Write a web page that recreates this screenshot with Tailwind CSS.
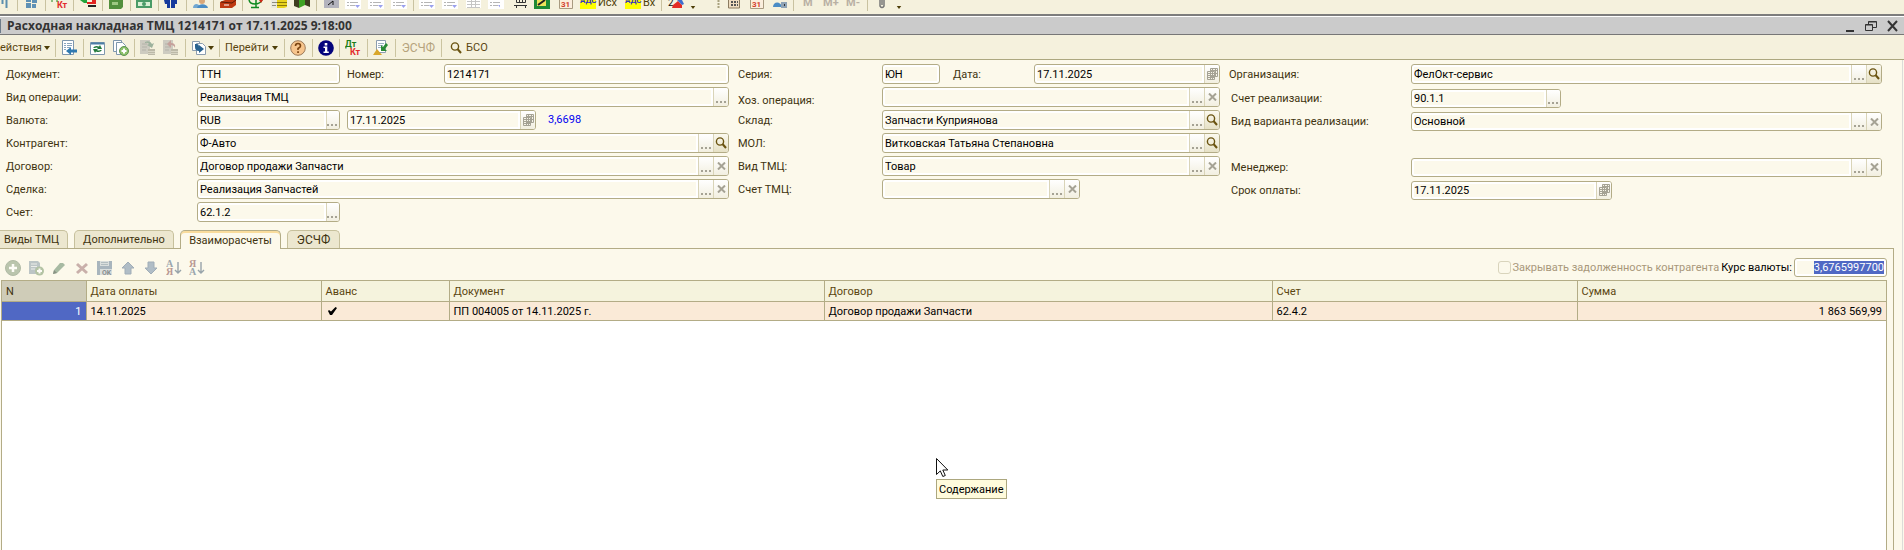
<!DOCTYPE html>
<html lang="ru">
<head>
    <meta charset="UTF-8">
    <meta name="viewport" content="width=device-width, initial-scale=1.0">
    <title>Расходная накладная ТМЦ</title>
    <script src="https://cdn.jsdelivr.net/npm/@tailwindcss/browser@4"></script>
</head>
<body class="min-h-screen flex flex-col overflow-hidden bg-[#fcf9eb] font-['Roboto',sans-serif] text-[11px] leading-[14px] text-[#40330f]">

    <!-- Общие иконки -->
    <svg class="hidden">
        <symbol id="dots" viewBox="0 0 11 2"><path d="M0 0h2v2H0zM4 0h2v2H4zM8 0h2v2H8z" fill="#a5a294"/></symbol>
        <symbol id="cross" viewBox="0 0 9 8"><path d="M1 .5 8 7.5M8 .5 1 7.5" stroke="#a5a294" stroke-width="2"/></symbol>
        <symbol id="lens" viewBox="0 0 12 12"><circle cx="5" cy="4.5" r="3.6" fill="none" stroke="#6a5310" stroke-width="1.4"/><path d="m7.5 7 3.5 4" stroke="#6a5310" stroke-width="2"/></symbol>
        <symbol id="cal" viewBox="0 0 11 12"><path d="M3.500.5h7v8h-7zM.5 3.500h7v8h-7z" fill="#f6f4e8" stroke="#a5a294"/><path d="M3.500 3.500v8M5.500.5v11M8.500.5v8M.5 5.500h10M.5 7.500h7M.5 9.500h7M3.500 2.500h7" fill="none" stroke="#a5a294"/></symbol>
        <symbol id="down" viewBox="0 0 6 4"><path d="M0 0h6L3 4z" fill="#4d3e08"/></symbol>
        <symbol id="doc" viewBox="0 0 16 9"><path d="M0 0h16v9H0z" fill="#fff"/><path d="M2 2.500h2M5 2.500h8M2 5.500h2M5 5.500h5" stroke="#b5b5b5"/><path d="M10 5h5l-2.500 3z" fill="#9aa0ee"/></symbol>
        <symbol id="cal31" viewBox="0 0 14 9"><path d="M.5-2h13v10.500H.5z" fill="#fbeedd" stroke="#a89a80"/></symbol>
    </svg>

    <!-- Верхняя панель: иконки видны только нижней частью -->
    <header class="flex items-start h-4 pr-4 overflow-hidden bg-[#f5f1dd] border-b-2 border-[#7d7d7d]">
        <svg class="w-[500px] h-[14px] shrink-0" viewBox="0 0 500 14">
            <path d="M17.500 0v11M45.500 0v11M73.500 0v11M102.500 0v11M130.500 0v11M158.500 0v11M186.500 0v11M213.500 0v11M242.500 0v11M316.500 0v11M413.500 0v11" stroke="#c9c2a0"/>
            <path d="M2.500 0v4M6.500 0v8" stroke="#5c8fae" stroke-width="2"/>
            <path d="M26 0h5v2h-5zM32 0h5v3h-5zM26 3h5v5h-5zM32 4h4v4h-4z" fill="#5f91b5"/>
            <path d="M80 0h7v3h-3z" fill="#22a33a"/><path d="M87 2h5V0h4v4h-9z" fill="#e22420"/><path d="M88 6h8" stroke="#222" stroke-width="2"/>
            <path d="M109 0h14v7l-2 2h-12z" fill="#528f3d"/><path d="M112 2h6v3h-6z" fill="#9ec883"/>
            <path d="M136 0h16v8h-16z" fill="#4a9b67"/><path d="M138 2h12v4h-12z" fill="#d8f0d4"/><circle cx="144" cy="4" r="2" fill="#4a9b67"/>
            <path d="M164 0h6v8h-3V4h-2zM171 0h6v4h-2v4h-4z" fill="#163a9c"/>
            <path d="M193 8c0-5 6-5 7-1l1 1z" fill="#71a7d1"/><circle cx="202" cy="1" r="3" fill="#d9a779"/><path d="M197 8c1-5 10-5 11 0z" fill="#4a8cc5"/>
            <path d="M220 2l5-2h11v5l-4 3h-12z" fill="#bf3a12"/><path d="m221 2 11 1 4-3" stroke="#5b1a05" fill="none"/><path d="M224 5h5" stroke="#fff"/>
            <path d="M249 0q1 4 6 4t7-4M256 0v8M251 7.500h8" stroke="#108a20" stroke-width="1.500" fill="none"/><path d="M259 0h4l-2 3z" fill="#d02818"/>
            <path d="M271 0h8v8h-8z" fill="#e9e9e0"/><path d="M272 2.500h5M272 5.500h4" stroke="#8c8c80"/><path d="M277 0h10v7l-3 1h-7z" fill="#e8d21c"/><path d="M277 2.500h10M277 5.500h10" stroke="#8a7a08"/>
            <path d="M294 0h5v8l-5-2zM305 0h5v7l-5-2z" fill="#3f3d20"/><path d="M299 0h6v5l-6 3z" fill="#3fa323"/>
            <path d="M324 0h15v8h-15z" fill="#b3b3bd"/><path d="m328 5 5-4v4" stroke="#111" fill="none"/>
            <use href="#doc" x="345" y="0" width="16" height="9"/><use href="#doc" x="368" y="0" width="16" height="9"/><use href="#doc" x="391" y="0" width="16" height="9"/>
            <use href="#doc" x="419" y="0" width="16" height="9"/><use href="#doc" x="442" y="0" width="16" height="9"/>
            <path d="M466 0h15v8h-15z" fill="#fff"/><path d="M467 1.500h13M467 4.500h13M467 7.500h13M471.500 0v8M475.500 0v8" stroke="#c5c5c5"/>
            <use href="#doc" x="488" y="0" width="16" height="9"/>
            <text x="57" y="8" font-size="9" font-weight="700" fill="#e22b2b" font-family="Roboto">Кт</text>
            <path d="M52 0v2M57 0v2" stroke="#1f8a1f"/>
        </svg>
        <svg class="w-[420px] h-[14px] shrink-0" viewBox="500 0 420 14">
            <path d="M661.500 0v11M793.500 0v11M867.500 0v11" stroke="#c9c2a0"/>
            <path d="M500 0h4v9h-4z" fill="#fff"/>
            <path d="M516.500 0v2.500h9V0M514 5.500h13M516.500 8V5M525.500 8V5M519.500 0v2M522.500 0v2" stroke="#333" fill="none"/>
            <path d="M534 0h16v9h-16z" fill="#1e8a35"/><path d="M537 0h9v6h-9z" fill="#eee35a"/><path d="m538 5 7-5" stroke="#222" stroke-width="2"/>
            <use href="#cal31" x="559" y="0" width="14" height="9"/><text x="561" y="7" font-size="8" font-weight="700" fill="#d2402a" font-family="Roboto">31</text>
            <path d="M580 0h16v9h-16zM625 0h16v9h-16z" fill="#ffff00"/>
            <text x="580" y="3" font-size="8" font-weight="700" fill="#3434c4" font-family="Roboto">АДС</text>
            <text x="625" y="3" font-size="8" font-weight="700" fill="#3434c4" font-family="Roboto">АДС</text>
            <text x="598" y="6" font-size="11" fill="#4d3e08" font-family="Roboto">Исх</text>
            <text x="643" y="6" font-size="11" fill="#4d3e08" font-family="Roboto">Вх</text>
            <text x="668" y="6" font-size="10" fill="#111" font-family="Roboto">2</text>
            <path d="m673 5 5-4 4 4v3h-10z" fill="#e42c25"/><path d="M677 0h5l2 4-2 1z" fill="#3e6fd0"/>
            <use href="#down" x="690" y="6" width="6" height="3"/><use href="#down" x="896" y="6" width="6" height="3"/>
            <path d="M718.500 0v8" stroke="#a9a27f" stroke-width="2" stroke-dasharray="2 1"/>
            <path d="M728.500-1h11v9h-11z" fill="#efdcc0" stroke="#8b7b60"/><path d="M731 2h7M731 5h7" stroke="#555" stroke-width="2" stroke-dasharray="2 1"/>
            <use href="#cal31" x="750" y="0" width="14" height="9"/><text x="752" y="7" font-size="8" font-weight="700" fill="#d2402a" font-family="Roboto">31</text>
            <path d="M773 7c0-6 8-6 9 0z" fill="#4a8cc5"/><path d="M781 2h6v6h-6z" fill="#8fa3b5"/><path d="M784.500 4v2" stroke="#333"/>
            <g font-family="Roboto" font-weight="700" font-size="11" fill="#b9b0a4"><text x="803" y="6">M</text><text x="823" y="6">M+</text><text x="846" y="6">M-</text></g>
            <path d="M879 0h6M880 1v5q2 3 4 0V1M882 1v4" stroke="#777" stroke-width="1.500" fill="none"/>
        </svg>
    </header>

    <!-- Заголовок окна -->
    <div class="flex items-center justify-between h-[19px] border-t border-t-white border-b border-b-[#777] bg-[#cbcbcb] pr-[6px]">
        <div class="flex items-center">
            <span class="w-px h-[14px] bg-[#6d7b8a] mr-[6px]"></span>
            <h1 class="font-['Open_Sans',sans-serif] text-[12px] font-bold text-[#333]">Расходная накладная ТМЦ 1214171 от 17.11.2025 9:18:00</h1>
        </div>
        <div class="flex items-center gap-[10px]">
            <button aria-label="Свернуть"><svg class="w-[9px] h-3" viewBox="0 0 9 12"><path d="M0 11h8" stroke="#333" stroke-width="2"/></svg></button>
            <button aria-label="Восстановить"><svg class="w-3 h-3" viewBox="0 0 12 12"><path d="M3.500 4V1.500h8v6H8M3.500 2h8M.5 4.500h7v6h-7zM.5 5h7" stroke="#333" fill="none"/></svg></button>
            <button aria-label="Закрыть"><svg class="w-[11px] h-3" viewBox="0 0 11 12"><path d="m1 1 9 10M10 1 1 11" stroke="#333" stroke-width="2"/></svg></button>
        </div>
    </div>

    <!-- Панель команд -->
    <div class="flex items-center h-[25px] pt-px bg-[#f5f1dd] border-b border-[#aca77f] text-[#5a4510]">
        <button class="flex items-center gap-[2px] w-[55px]"><span>ействия</span><svg class="w-[6px] h-[4px]"><use href="#down"/></svg></button>
        <span class="w-px h-[18px] bg-[#cbc4a0] mr-[5px]"></span>
        <button aria-label="Записать и закрыть"><svg class="w-[17px] h-4" viewBox="0 0 17 16"><path d="M1.500.5h11v14h-11z" fill="#fff" stroke="#7e97ad"/><path d="M3 3.500h2M6 3.500h5M3 5.500h2M6 5.500h5M3 7.500h2M6 7.500h3M3 9.500h2" stroke="#8aa5bd"/><path d="m5 11 5-4v2.500h6v3h-6V15z" fill="#2f79b0"/></svg></button>
        <span class="w-px h-[18px] bg-[#cbc4a0] ml-[5px] mr-[6px]"></span>
        <button aria-label="Обновить"><svg class="w-[15px] h-4" viewBox="0 0 15 16"><path d="M.5 2.500h14v12H.5z" fill="#fff" stroke="#7e97ad"/><path d="M1 3.500h13" stroke="#4c7ea5" stroke-width="2"/><path d="M3 8q2-3 6-1.500L10 5l2 4H7l1-1q-2-1-3 0zM12 10q-2 3-6 1.500L5 13l-2-4h5l-1 1q2 1 3 0z" fill="#237a3c"/></svg></button>
        <button aria-label="Скопировать" class="ml-2"><svg class="w-4 h-4" viewBox="0 0 16 16"><path d="M.5.5h8v11h-8z" fill="#fff" stroke="#7e97ad"/><path d="M3.500 2.500h6l3 3v9h-9z" fill="#fff" stroke="#7e97ad"/><circle cx="11" cy="11" r="4.500" fill="#8cc06a" stroke="#5d9450"/><path d="M11 8.500v5M8.500 11h5" stroke="#fff" stroke-width="2"/></svg></button>
        <span class="w-px h-[18px] bg-[#cbc4a0] mx-[5px]"></span>
        <button disabled aria-label="Провести"><svg class="w-4 h-4" viewBox="0 0 16 16"><path d="M0 0h10v14H0z" fill="#cdcbc0"/><path d="M2 4h5M2 7h5M2 10h4" stroke="#b3b2a9"/><path d="M5 2q5-2 7 2l2-1-2 5-5-3 2-1q-1-2-4-1z" fill="#9db29d"/><path d="M8 9h7v6H8z" fill="#bcb9a8"/><path d="M8 11.500h7M8 13.500h7" stroke="#d8d5c5"/></svg></button>
        <button disabled aria-label="Отмена проведения" class="ml-[7px]"><svg class="w-4 h-4" viewBox="0 0 16 16"><path d="M0 0h10v14H0z" fill="#cdcbc0"/><path d="M2 4h5M2 7h5M2 10h4" stroke="#b3b2a9"/><path d="m4 4 4-4v3q5 0 4 5-1-3-4-3v3z" fill="#c5a19b"/><path d="M8 9h7v6H8z" fill="#bcb9a8"/><path d="M8 11.500h7M8 13.500h7" stroke="#d8d5c5"/></svg></button>
        <span class="w-px h-[18px] bg-[#cbc4a0] mx-[6px]"></span>
        <button aria-label="Ввести на основании" class="flex items-center gap-[2px]"><svg class="w-[14px] h-4" viewBox="0 0 14 16"><path d="M.5 1.500h7v9h-7z" fill="#fff" stroke="#8c9daf"/><path d="M4.500 3.500h6l3 3v8h-9z" fill="#fff" stroke="#8c9daf"/><path d="M3 4h2q2 0 2 3V5l5 4-5 4v-2q-4 0-4-4z" fill="#2a6390"/></svg><svg class="w-[6px] h-[4px]"><use href="#down"/></svg></button>
        <span class="w-px h-[18px] bg-[#cbc4a0] mx-[5px]"></span>
        <button class="flex items-center gap-[3px]"><span>Перейти</span><svg class="w-[6px] h-[4px]"><use href="#down"/></svg></button>
        <span class="w-px h-[18px] bg-[#cbc4a0] ml-[6px] mr-[5px]"></span>
        <button aria-label="Справка"><svg class="w-4 h-4" viewBox="0 0 16 16"><circle cx="8" cy="8" r="7.300" fill="#f7c58d" stroke="#9c7a5a"/><path d="M5.500 6q0-2.500 2.500-2.500T10.500 6Q10.500 7.300 8 8.500V10" fill="none" stroke="#7a4310" stroke-width="1.600"/><path d="M7.200 11.200h1.700v1.700H7.200z" fill="#7a4310"/></svg></button>
        <span class="w-px h-[18px] bg-[#cbc4a0] ml-[6px] mr-[5px]"></span>
        <button aria-label="Информация"><svg class="w-4 h-4" viewBox="0 0 16 16"><circle cx="8" cy="8" r="7.800" fill="#04047c"/><path d="M6.700 3h2.600v2.500H6.700zM5.500 6.500h3.800v5h1.500V13H5.500v-1.500H7V8H5.500z" fill="#fff"/></svg></button>
        <span class="w-px h-[18px] bg-[#cbc4a0] mx-[5px]"></span>
        <button aria-label="Проводки"><svg class="w-4 h-4" viewBox="0 0 16 16" font-family="Roboto" font-weight="700" font-size="9"><text x="0" y="7" fill="#1b7d16">Дт</text><text x="5" y="15" fill="#e22b2b">Кт</text></svg></button>
        <span class="w-px h-[18px] bg-[#cbc4a0] ml-[6px] mr-[5px]"></span>
        <button aria-label="Движения"><svg class="w-4 h-4" viewBox="0 0 16 16"><path d="M3.500.5h9v12h-9z" fill="#fff" stroke="#8c9daf"/><path d="M5 3.500h6M5 5.500h5M5 7.500h4" stroke="#9db0c2"/><path d="m0 15 4-6 5 6z" fill="#d9a72b"/><path d="m13 3 2 2-3 4 2 2H8V5l2 2z" fill="#2a8a34"/></svg></button>
        <span class="w-px h-[18px] bg-[#cbc4a0] mx-[6px]"></span>
        <button disabled class="text-[#b5a37c] text-[12px]">ЭСЧФ</button>
        <span class="w-px h-[18px] bg-[#cbc4a0] ml-[6px] mr-2"></span>
        <button class="flex items-center gap-1"><svg class="w-3 h-3"><use href="#lens"/></svg><span>БСО</span></button>
    </div>

    <main class="flex flex-col grow border-r border-[#dcdcd8] mr-px">
        <!-- Реквизиты документа -->
        <form class="grid grid-cols-[723fr_482fr_653fr] gap-x-[9px] pt-1 pl-[6px] pr-5 [&_input]:pt-px [&_label]:mt-px">

            <div class="grid grid-cols-[191px_1fr] auto-rows-[20px] gap-y-[3px] items-center">
                <label for="doc-type">Документ:</label>
                <div class="flex items-center">
                    <div class="flex w-[143px] h-5 shrink-0 bg-white border border-[#b3ac86] rounded-[3px] p-[2px]"><input id="doc-type" value="ТТН" class="w-full min-w-0 bg-[#fcf9eb] text-black outline-none"></div>
                    <label for="number" class="w-[104px] shrink-0 pl-[7px] whitespace-nowrap">Номер:</label>
                    <div class="flex grow h-5 bg-white border border-[#b3ac86] rounded-[3px] p-[2px]"><input id="number" value="1214171" class="w-full min-w-0 bg-[#fcf9eb] text-black outline-none"></div>
                </div>

                <label for="operation">Вид операции:</label>
                <div class="flex h-5 bg-white border border-[#b3ac86] rounded-[3px] overflow-hidden">
                    <input id="operation" value="Реализация ТМЦ" class="grow min-w-0 m-[2px] bg-[#fcf9eb] text-black outline-none">
                    <button type="button" aria-label="Выбрать" class="w-[15px] flex items-end justify-center pb-[3px] border-l border-[#d9d4b8] bg-linear-to-b from-white to-[#f2efe0]"><svg class="w-[11px] h-[2px]"><use href="#dots"/></svg></button>
                </div>

                <label for="currency">Валюта:</label>
                <div class="flex items-center">
                    <div class="flex w-[143px] h-5 bg-white border border-[#b3ac86] rounded-[3px] overflow-hidden">
                        <input id="currency" value="RUB" class="grow min-w-0 m-[2px] bg-[#fcf9eb] text-black outline-none">
                        <button type="button" aria-label="Выбрать" class="w-[15px] flex items-end justify-center pb-[3px] border-l border-[#d9d4b8] bg-linear-to-b from-white to-[#f2efe0]"><svg class="w-[11px] h-[2px]"><use href="#dots"/></svg></button>
                    </div>
                    <div class="flex w-[189px] h-5 ml-[7px] bg-white border border-[#b3ac86] rounded-[3px] overflow-hidden">
                        <input aria-label="Дата курса" value="17.11.2025" class="grow min-w-0 m-[2px] bg-[#fcf9eb] text-black outline-none">
                        <button type="button" aria-label="Календарь" class="w-[15px] flex items-center justify-center border-l border-[#d9d4b8] bg-linear-to-b from-white to-[#f2efe0]"><svg class="w-[11px] h-3"><use href="#cal"/></svg></button>
                    </div>
                    <span class="ml-3 text-[#0000f0]">3,6698</span>
                </div>

                <label for="contractor">Контрагент:</label>
                <div class="flex h-5 bg-white border border-[#b3ac86] rounded-[3px] overflow-hidden">
                    <input id="contractor" value="Ф-Авто" class="grow min-w-0 m-[2px] bg-[#fcf9eb] text-black outline-none">
                    <button type="button" aria-label="Выбрать" class="w-[15px] flex items-end justify-center pb-[3px] border-l border-[#d9d4b8] bg-linear-to-b from-white to-[#f2efe0]"><svg class="w-[11px] h-[2px]"><use href="#dots"/></svg></button>
                    <button type="button" aria-label="Открыть" class="w-[15px] flex items-center justify-center border-l border-[#d9d4b8] bg-linear-to-b from-[#fbf9ee] to-[#e6e1c6]"><svg class="w-3 h-3"><use href="#lens"/></svg></button>
                </div>

                <label for="contract">Договор:</label>
                <div class="flex h-5 bg-white border border-[#b3ac86] rounded-[3px] overflow-hidden">
                    <input id="contract" value="Договор продажи Запчасти" class="grow min-w-0 m-[2px] bg-[#fcf9eb] text-black outline-none">
                    <button type="button" aria-label="Выбрать" class="w-[15px] flex items-end justify-center pb-[3px] border-l border-[#d9d4b8] bg-linear-to-b from-white to-[#f2efe0]"><svg class="w-[11px] h-[2px]"><use href="#dots"/></svg></button>
                    <button type="button" aria-label="Очистить" class="w-[15px] flex items-center justify-center border-l border-[#d9d4b8] bg-linear-to-b from-white to-[#f2efe0]"><svg class="w-[9px] h-2"><use href="#cross"/></svg></button>
                </div>

                <label for="deal">Сделка:</label>
                <div class="flex h-5 bg-white border border-[#b3ac86] rounded-[3px] overflow-hidden">
                    <input id="deal" value="Реализация Запчастей" class="grow min-w-0 m-[2px] bg-[#fcf9eb] text-black outline-none">
                    <button type="button" aria-label="Выбрать" class="w-[15px] flex items-end justify-center pb-[3px] border-l border-[#d9d4b8] bg-linear-to-b from-white to-[#f2efe0]"><svg class="w-[11px] h-[2px]"><use href="#dots"/></svg></button>
                    <button type="button" aria-label="Очистить" class="w-[15px] flex items-center justify-center border-l border-[#d9d4b8] bg-linear-to-b from-white to-[#f2efe0]"><svg class="w-[9px] h-2"><use href="#cross"/></svg></button>
                </div>

                <label for="account">Счет:</label>
                <div class="flex w-[143px] h-5 bg-white border border-[#b3ac86] rounded-[3px] overflow-hidden">
                    <input id="account" value="62.1.2" class="grow min-w-0 m-[2px] bg-[#fcf9eb] text-black outline-none">
                    <button type="button" aria-label="Выбрать" class="w-[15px] flex items-end justify-center pb-[3px] border-l border-[#d9d4b8] bg-linear-to-b from-white to-[#f2efe0]"><svg class="w-[11px] h-[2px]"><use href="#dots"/></svg></button>
                </div>
            </div>

            <div class="grid grid-cols-[144px_1fr] auto-rows-[20px] gap-y-[3px] items-center">
                <label for="series">Серия:</label>
                <div class="flex items-center">
                    <div class="flex w-[58px] h-5 shrink-0 bg-white border border-[#b3ac86] rounded-[3px] p-[2px]"><input id="series" value="ЮН" class="w-full min-w-0 bg-[#fcf9eb] text-black outline-none"></div>
                    <label for="date" class="w-[94px] shrink-0 pl-[13px] whitespace-nowrap">Дата:</label>
                    <div class="flex grow h-5 bg-white border border-[#b3ac86] rounded-[3px] overflow-hidden">
                        <input id="date" value="17.11.2025" class="grow min-w-0 m-[2px] bg-[#fcf9eb] text-black outline-none">
                        <button type="button" aria-label="Календарь" class="w-[15px] flex items-center justify-center border-l border-[#d9d4b8] bg-linear-to-b from-white to-[#f2efe0]"><svg class="w-[11px] h-3"><use href="#cal"/></svg></button>
                    </div>
                </div>

                <label for="biz-operation" class="pt-[6px]">Хоз. операция:</label>
                <div class="flex h-5 bg-white border border-[#b3ac86] rounded-[3px] overflow-hidden">
                    <input id="biz-operation" class="grow min-w-0 m-[2px] bg-[#fcf9eb] text-black outline-none">
                    <button type="button" aria-label="Выбрать" class="w-[15px] flex items-end justify-center pb-[3px] border-l border-[#d9d4b8] bg-linear-to-b from-white to-[#f2efe0]"><svg class="w-[11px] h-[2px]"><use href="#dots"/></svg></button>
                    <button type="button" aria-label="Очистить" class="w-[15px] flex items-center justify-center border-l border-[#d9d4b8] bg-linear-to-b from-white to-[#f2efe0]"><svg class="w-[9px] h-2"><use href="#cross"/></svg></button>
                </div>

                <label for="warehouse">Склад:</label>
                <div class="flex h-5 bg-white border border-[#b3ac86] rounded-[3px] overflow-hidden">
                    <input id="warehouse" value="Запчасти Куприянова" class="grow min-w-0 m-[2px] bg-[#fcf9eb] text-black outline-none">
                    <button type="button" aria-label="Выбрать" class="w-[15px] flex items-end justify-center pb-[3px] border-l border-[#d9d4b8] bg-linear-to-b from-white to-[#f2efe0]"><svg class="w-[11px] h-[2px]"><use href="#dots"/></svg></button>
                    <button type="button" aria-label="Открыть" class="w-[15px] flex items-center justify-center border-l border-[#d9d4b8] bg-linear-to-b from-[#fbf9ee] to-[#e6e1c6]"><svg class="w-3 h-3"><use href="#lens"/></svg></button>
                </div>

                <label for="mol">МОЛ:</label>
                <div class="flex h-5 bg-white border border-[#b3ac86] rounded-[3px] overflow-hidden">
                    <input id="mol" value="Витковская Татьяна Степановна" class="grow min-w-0 m-[2px] bg-[#fcf9eb] text-black outline-none">
                    <button type="button" aria-label="Выбрать" class="w-[15px] flex items-end justify-center pb-[3px] border-l border-[#d9d4b8] bg-linear-to-b from-white to-[#f2efe0]"><svg class="w-[11px] h-[2px]"><use href="#dots"/></svg></button>
                    <button type="button" aria-label="Открыть" class="w-[15px] flex items-center justify-center border-l border-[#d9d4b8] bg-linear-to-b from-[#fbf9ee] to-[#e6e1c6]"><svg class="w-3 h-3"><use href="#lens"/></svg></button>
                </div>

                <label for="tmc-kind">Вид ТМЦ:</label>
                <div class="flex h-5 bg-white border border-[#b3ac86] rounded-[3px] overflow-hidden">
                    <input id="tmc-kind" value="Товар" class="grow min-w-0 m-[2px] bg-[#fcf9eb] text-black outline-none">
                    <button type="button" aria-label="Выбрать" class="w-[15px] flex items-end justify-center pb-[3px] border-l border-[#d9d4b8] bg-linear-to-b from-white to-[#f2efe0]"><svg class="w-[11px] h-[2px]"><use href="#dots"/></svg></button>
                    <button type="button" aria-label="Очистить" class="w-[15px] flex items-center justify-center border-l border-[#d9d4b8] bg-linear-to-b from-white to-[#f2efe0]"><svg class="w-[9px] h-2"><use href="#cross"/></svg></button>
                </div>

                <label for="tmc-account">Счет ТМЦ:</label>
                <div class="flex w-[198px] h-5 bg-white border border-[#b3ac86] rounded-[3px] overflow-hidden">
                    <input id="tmc-account" class="grow min-w-0 m-[2px] bg-[#fcf9eb] text-black outline-none">
                    <button type="button" aria-label="Выбрать" class="w-[15px] flex items-end justify-center pb-[3px] border-l border-[#d9d4b8] bg-linear-to-b from-white to-[#f2efe0]"><svg class="w-[11px] h-[2px]"><use href="#dots"/></svg></button>
                    <button type="button" aria-label="Очистить" class="w-[15px] flex items-center justify-center border-l border-[#d9d4b8] bg-linear-to-b from-white to-[#f2efe0]"><svg class="w-[9px] h-2"><use href="#cross"/></svg></button>
                </div>
            </div>

            <div class="grid grid-cols-[182px_1fr] auto-rows-[20px] gap-y-[3px] items-center">
                <label for="company">Организация:</label>
                <div class="flex h-5 bg-white border border-[#b3ac86] rounded-[3px] overflow-hidden">
                    <input id="company" value="ФелОкт-сервис" class="grow min-w-0 m-[2px] bg-[#fcf9eb] text-black outline-none">
                    <button type="button" aria-label="Выбрать" class="w-[15px] flex items-end justify-center pb-[3px] border-l border-[#d9d4b8] bg-linear-to-b from-white to-[#f2efe0]"><svg class="w-[11px] h-[2px]"><use href="#dots"/></svg></button>
                    <button type="button" aria-label="Открыть" class="w-[15px] flex items-center justify-center border-l border-[#d9d4b8] bg-linear-to-b from-[#fbf9ee] to-[#e6e1c6]"><svg class="w-3 h-3"><use href="#lens"/></svg></button>
                </div>

                <label for="sale-account" class="pl-[2px] pt-[3px]">Счет реализации:</label>
                <div class="flex w-[150px] h-[19px] mt-[3px] bg-white border border-[#b3ac86] rounded-[3px] overflow-hidden">
                    <input id="sale-account" value="90.1.1" class="grow min-w-0 m-[2px] bg-[#fcf9eb] text-black outline-none">
                    <button type="button" aria-label="Выбрать" class="w-[15px] flex items-end justify-center pb-[3px] border-l border-[#d9d4b8] bg-linear-to-b from-white to-[#f2efe0]"><svg class="w-[11px] h-[2px]"><use href="#dots"/></svg></button>
                </div>

                <label for="sale-variant" class="pl-[2px] pt-[3px]">Вид варианта реализации:</label>
                <div class="flex h-[19px] mt-[3px] bg-white border border-[#b3ac86] rounded-[3px] overflow-hidden">
                    <input id="sale-variant" value="Основной" class="grow min-w-0 m-[2px] bg-[#fcf9eb] text-black outline-none">
                    <button type="button" aria-label="Выбрать" class="w-[15px] flex items-end justify-center pb-[3px] border-l border-[#d9d4b8] bg-linear-to-b from-white to-[#f2efe0]"><svg class="w-[11px] h-[2px]"><use href="#dots"/></svg></button>
                    <button type="button" aria-label="Очистить" class="w-[15px] flex items-center justify-center border-l border-[#d9d4b8] bg-linear-to-b from-white to-[#f2efe0]"><svg class="w-[9px] h-2"><use href="#cross"/></svg></button>
                </div>

                <label for="manager" class="row-start-5 pl-[2px] pt-[2px]">Менеджер:</label>
                <div class="row-start-5 flex h-[19px] mt-[2px] bg-white border border-[#b3ac86] rounded-[3px] overflow-hidden">
                    <input id="manager" class="grow min-w-0 m-[2px] bg-[#fcf9eb] text-black outline-none">
                    <button type="button" aria-label="Выбрать" class="w-[15px] flex items-end justify-center pb-[3px] border-l border-[#d9d4b8] bg-linear-to-b from-white to-[#f2efe0]"><svg class="w-[11px] h-[2px]"><use href="#dots"/></svg></button>
                    <button type="button" aria-label="Очистить" class="w-[15px] flex items-center justify-center border-l border-[#d9d4b8] bg-linear-to-b from-white to-[#f2efe0]"><svg class="w-[9px] h-2"><use href="#cross"/></svg></button>
                </div>

                <label for="due" class="row-start-6 pl-[2px] pt-[2px]">Срок оплаты:</label>
                <div class="row-start-6 flex w-[201px] h-[19px] mt-[2px] bg-white border border-[#b3ac86] rounded-[3px] overflow-hidden">
                    <input id="due" value="17.11.2025" class="grow min-w-0 m-[2px] bg-[#fcf9eb] text-black outline-none">
                    <button type="button" aria-label="Календарь" class="w-[15px] flex items-center justify-center border-l border-[#d9d4b8] bg-linear-to-b from-white to-[#f2efe0]"><svg class="w-[11px] h-3"><use href="#cal"/></svg></button>
                </div>
            </div>
        </form>

        <!-- Закладки -->
        <div role="tablist" class="flex items-end gap-[6px] h-[18px] mt-2">
            <button role="tab" class="w-[68px] h-[18px] pl-1 pt-px text-left bg-[#ece7cf] border border-l-0 border-b-0 border-[#c6c09c] rounded-tr-[5px]">Виды ТМЦ</button>
            <button role="tab" class="w-[100px] h-[18px] pt-px bg-[#ece7cf] border border-b-0 border-[#c6c09c] rounded-t-[5px]">Дополнительно</button>
            <button role="tab" aria-selected="true" class="w-[101px] h-[19px] pt-px -mb-px z-10 bg-[#fcf9eb] border border-b-0 border-t-[#b3ac86] border-x-[#b3ac86] rounded-t-[5px] shadow-[inset_0_2px_0_#f9dc9c]">Взаиморасчеты</button>
            <button role="tab" class="w-[53px] h-[18px] pt-px bg-[#ece7cf] border border-b-0 border-[#c6c09c] rounded-t-[5px] text-[12px]">ЭСЧФ</button>
        </div>

        <section class="flex flex-col grow mr-2 pr-[6px] pl-px border-t border-r border-[#b3ac86]">
            <div class="flex items-center justify-between h-[31px] pt-[6px]">
                <div class="flex items-center gap-[7px] pl-1 opacity-60">
                    <button disabled aria-label="Добавить"><svg class="w-4 h-4" viewBox="0 0 16 16"><circle cx="8" cy="8" r="7.500" fill="#8fa384" stroke="#7f9178"/><path d="M8 4v8M4 8h8" stroke="#fff" stroke-width="2.500"/></svg></button>
                    <button disabled aria-label="Скопировать"><svg class="w-4 h-4" viewBox="0 0 16 16"><path d="M1 1h9l2 2v11H1z" fill="#93a3af"/><path d="M3 4h6M3 6.500h6M3 9h4" stroke="#e2e6e8"/><circle cx="11.500" cy="11" r="4.500" fill="#84a075"/><path d="M11.500 8.500v5M9 11h5" stroke="#fff" stroke-width="2"/></svg></button>
                    <button disabled aria-label="Изменить"><svg class="w-4 h-4" viewBox="0 0 16 16"><path d="m3 10 6-7h3l2 2-8 8-4 1z" fill="#6f9173"/><path d="m2 14 1-4 3 3z" fill="#3d4f3f"/></svg></button>
                    <button disabled aria-label="Удалить"><svg class="w-4 h-4" viewBox="0 0 16 16"><path d="m3 4 10 9M13 4 3 13" stroke="#a88080" stroke-width="3"/></svg></button>
                    <button disabled aria-label="Закончить редактирование"><svg class="w-4 h-4" viewBox="0 0 16 16"><path d="M0 1h15v14H0z" fill="#7288a0"/><path d="M3 1h9v5H3zM3 9h12v6H3z" fill="#c5ced4"/><path d="M4 2.500h7M4 4.500h7" stroke="#8497a5"/><text x="5" y="15" font-size="7" font-weight="700" font-family="Roboto" fill="#3b4852">OK</text></svg></button>
                    <button disabled aria-label="Вверх"><svg class="w-4 h-4" viewBox="0 0 16 16"><path d="m8 2 6 6h-3v6H5V8H2z" fill="#7f96ae" stroke="#647c96"/></svg></button>
                    <button disabled aria-label="Вниз"><svg class="w-4 h-4" viewBox="0 0 16 16"><path d="m8 14 6-6h-3V2H5v6H2z" fill="#7f96ae" stroke="#647c96"/></svg></button>
                    <button disabled aria-label="Сортировать по возрастанию"><svg class="w-4 h-4" viewBox="0 0 16 16" font-family="Liberation Serif" font-size="10" font-weight="700"><text x="0" y="7" fill="#5d7085">А</text><text x="0" y="15" fill="#8d5a5a">Я</text><path d="M12 2v11m-3-3 3 3 3-3" stroke="#566c80" fill="none" stroke-width="1.400"/></svg></button>
                    <button disabled aria-label="Сортировать по убыванию"><svg class="w-4 h-4" viewBox="0 0 16 16" font-family="Liberation Serif" font-size="10" font-weight="700"><text x="0" y="7" fill="#8d5a5a">Я</text><text x="0" y="15" fill="#5d7085">А</text><path d="M12 2v11m-3-3 3 3 3-3" stroke="#566c80" fill="none" stroke-width="1.400"/></svg></button>
                </div>
                <div class="flex items-center">
                    <input id="close-debt" type="checkbox" disabled class="appearance-none w-[13px] h-[13px] mr-px border border-[#d9d4bc] rounded-[3px] bg-[#fcf9eb]">
                    <label for="close-debt" class="text-[#a8977a]">Закрывать задолженность контрагента</label>
                    <label for="rate" class="ml-[2px] mr-[2px] text-black">Курс валюты:</label>
                    <div class="flex w-[93px] h-[19px] bg-white border border-[#b3ac86] rounded-[3px] p-[2px]"><input id="rate" value="3,6765997700" class="w-full min-w-0 bg-[#fcf9eb] text-right text-black outline-none selection:bg-[#5068c4] selection:text-white"></div>
                </div>
            </div>

            <!-- Табличная часть -->
            <div class="grow bg-white border-l border-r border-[#b3ac86]">
                <table class="w-full table-fixed border-collapse text-left">
                    <thead>
                        <tr class="h-[21px] bg-[#f5f3dd] text-[#5a4510]">
                            <th class="w-[84px] px-1 pt-px font-normal border-y border-r border-[#b3ac86] bg-[#cfccb8] text-[#40330f]">N</th>
                            <th class="w-[235px] px-1 pt-px font-normal border border-[#b3ac86]">Дата оплаты</th>
                            <th class="w-[128px] px-1 pt-px font-normal border border-[#b3ac86]">Аванс</th>
                            <th class="w-[375px] px-1 pt-px font-normal border border-[#b3ac86]">Документ</th>
                            <th class="w-[448px] px-1 pt-px font-normal border border-[#b3ac86]">Договор</th>
                            <th class="w-[305px] px-1 pt-px font-normal border border-[#b3ac86]">Счет</th>
                            <th class="w-[309px] px-1 pt-px font-normal border-y border-l border-[#b3ac86]">Сумма</th>
                        </tr>
                    </thead>
                    <tbody>
                        <tr class="h-[19px] bg-[#faead7] text-black">
                            <td class="px-1 pt-px text-right border-b border-r border-[#b3ac86] bg-[#5068c4] text-white">1</td>
                            <td class="px-1 pt-px border border-[#b3ac86]">14.11.2025</td>
                            <td class="px-[6px] border border-[#b3ac86]"><svg class="w-[9px] h-2" viewBox="0 0 9 8" role="img" aria-label="Да"><path d="M0 4l1-1 2 1.500L7.500 0 9 1 4 8H2z"/></svg></td>
                            <td class="px-1 pt-px border border-[#b3ac86]">ПП 004005 от 14.11.2025 г.</td>
                            <td class="px-1 pt-px border border-[#b3ac86]">Договор продажи Запчасти</td>
                            <td class="px-1 pt-px border border-[#b3ac86]">62.4.2</td>
                            <td class="px-1 pt-px text-right border-b border-l border-[#b3ac86]">1 863 569,99</td>
                        </tr>
                    </tbody>
                </table>
            </div>
        </section>
    </main>

    <!-- Курсор и всплывающая подсказка -->
    <svg class="absolute left-[936px] top-[458px] w-3 h-[19px]" viewBox="0 0 12 19"><path d="M.5.5v16l3.800-3.600 2.500 5.600 2.500-1-2.500-5.500h5z" fill="#fff" stroke="#111"/></svg>
    <div role="tooltip" class="absolute left-[936px] top-[479px] h-5 px-[2px] pt-px leading-[18px] bg-[#fffbdc] border border-[#aca77f] text-black">Содержание</div>

    <script>
        // Курс сразу выделен для ввода
        const rate = document.getElementById('rate');
        rate.focus();
        rate.select();
    </script>
</body>
</html>
